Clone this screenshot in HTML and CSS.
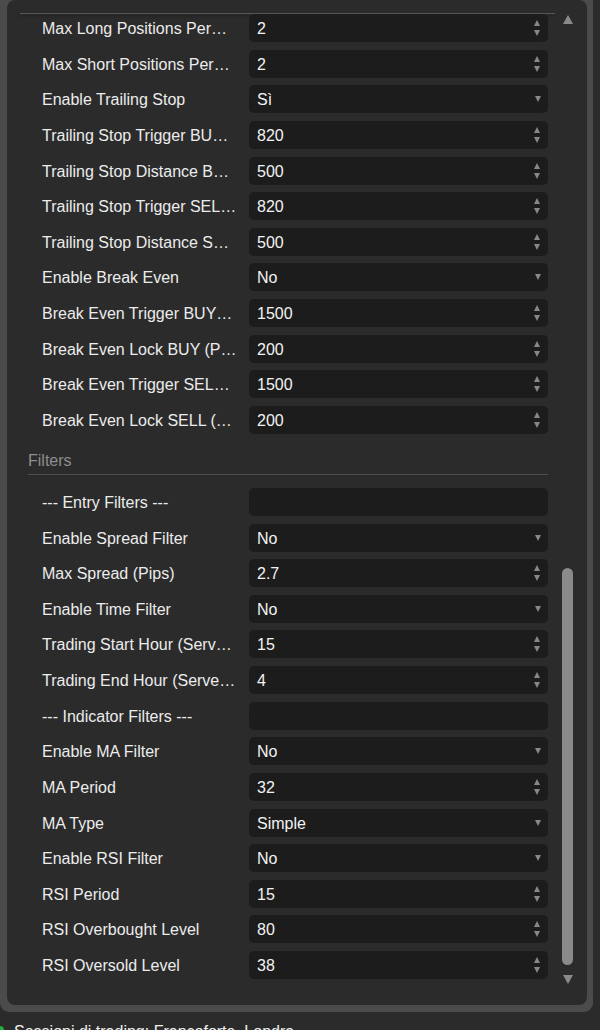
FILE: index.html
```html
<!DOCTYPE html>
<html lang="it">
<head>
<meta charset="utf-8">
<title>Parametri</title>
<link rel="stylesheet" href="styles.css">
</head>
<body>
<div class="frame">
  <div class="panel">
    <div class="content">
      <div class="top-rule"></div>
      <div class="rows">
        <div class="row"><span class="label">Max Long Positions Per…</span><div class="field spin"><span class="val">2</span><span class="spinner"></span></div></div>
        <div class="row"><span class="label">Max Short Positions Per…</span><div class="field spin"><span class="val">2</span><span class="spinner"></span></div></div>
        <div class="row"><span class="label">Enable Trailing Stop</span><div class="field select"><span class="val">Sì</span><span class="caret"></span></div></div>
        <div class="row"><span class="label">Trailing Stop Trigger BU…</span><div class="field spin"><span class="val">820</span><span class="spinner"></span></div></div>
        <div class="row"><span class="label">Trailing Stop Distance B…</span><div class="field spin"><span class="val">500</span><span class="spinner"></span></div></div>
        <div class="row"><span class="label">Trailing Stop Trigger SEL…</span><div class="field spin"><span class="val">820</span><span class="spinner"></span></div></div>
        <div class="row"><span class="label">Trailing Stop Distance S…</span><div class="field spin"><span class="val">500</span><span class="spinner"></span></div></div>
        <div class="row"><span class="label">Enable Break Even</span><div class="field select"><span class="val">No</span><span class="caret"></span></div></div>
        <div class="row"><span class="label">Break Even Trigger BUY…</span><div class="field spin"><span class="val">1500</span><span class="spinner"></span></div></div>
        <div class="row"><span class="label">Break Even Lock BUY (P…</span><div class="field spin"><span class="val">200</span><span class="spinner"></span></div></div>
        <div class="row"><span class="label">Break Even Trigger SEL…</span><div class="field spin"><span class="val">1500</span><span class="spinner"></span></div></div>
        <div class="row"><span class="label">Break Even Lock SELL (…</span><div class="field spin"><span class="val">200</span><span class="spinner"></span></div></div>
      </div>
      <div class="section-head">Filters</div>
      <div class="rows">
        <div class="row"><span class="label">--- Entry Filters ---</span><div class="field"></div></div>
        <div class="row"><span class="label">Enable Spread Filter</span><div class="field select"><span class="val">No</span><span class="caret"></span></div></div>
        <div class="row"><span class="label">Max Spread (Pips)</span><div class="field spin"><span class="val">2.7</span><span class="spinner"></span></div></div>
        <div class="row"><span class="label">Enable Time Filter</span><div class="field select"><span class="val">No</span><span class="caret"></span></div></div>
        <div class="row"><span class="label">Trading Start Hour (Serv…</span><div class="field spin"><span class="val">15</span><span class="spinner"></span></div></div>
        <div class="row"><span class="label">Trading End Hour (Serve…</span><div class="field spin"><span class="val">4</span><span class="spinner"></span></div></div>
        <div class="row"><span class="label">--- Indicator Filters ---</span><div class="field"></div></div>
        <div class="row"><span class="label">Enable MA Filter</span><div class="field select"><span class="val">No</span><span class="caret"></span></div></div>
        <div class="row"><span class="label">MA Period</span><div class="field spin"><span class="val">32</span><span class="spinner"></span></div></div>
        <div class="row"><span class="label">MA Type</span><div class="field select"><span class="val">Simple</span><span class="caret"></span></div></div>
        <div class="row"><span class="label">Enable RSI Filter</span><div class="field select"><span class="val">No</span><span class="caret"></span></div></div>
        <div class="row"><span class="label">RSI Period</span><div class="field spin"><span class="val">15</span><span class="spinner"></span></div></div>
        <div class="row"><span class="label">RSI Overbought Level</span><div class="field spin"><span class="val">80</span><span class="spinner"></span></div></div>
        <div class="row"><span class="label">RSI Oversold Level</span><div class="field spin"><span class="val">38</span><span class="spinner"></span></div></div>
      </div>
    </div>
    <div class="scrollbar">
      <span class="sb-up"></span>
      <div class="track"><div class="thumb"></div></div>
      <span class="sb-down"></span>
    </div>
  </div>
</div>
<div class="status"><span class="dot"></span><span class="status-text">Sessioni di trading: Francoforte, Londra</span></div>
</body>
</html>
```

FILE: styles.css
```css
html, body {
  margin: 0;
  padding: 0;
}
body {
  width: 600px;
  height: 1030px;
  overflow: hidden;
  background: #2b2b2b;
  font-family: "Liberation Sans", Arial, sans-serif;
  font-size: 16px;
  color: #e8e8e8;
}
.frame {
  width: 593px;
  height: 1012px;
  box-sizing: border-box;
  padding: 0 6px 7px 7px;
  background: #4b4b4b;
  border-radius: 0 0 9px 9px;
  display: flex;
}
.panel {
  flex: 1;
  background: #2b2b2b;
  border-radius: 8px;
  display: flex;
  overflow: hidden;
}
.content {
  width: 548px;
  flex: none;
}
.top-rule {
  margin: 13px 0 0 13px;
  height: 1px;
  background: #565656;
  box-shadow: 0 2px 3px rgba(0, 0, 0, 0.25);
}
.rows {
  padding: 0 7px 0 35px;
  display: flex;
  flex-direction: column;
  gap: 7.64px;
}
.content > .rows:first-of-type {
  padding-top: 2px;
}
.row {
  height: 28px;
  display: flex;
  align-items: center;
}
.label {
  width: 200px;
  flex: none;
  margin-right: 7px;
  padding-top: 2px;
  white-space: nowrap;
  overflow: hidden;
  text-overflow: ellipsis;
  color: #ececec;
  line-height: 18px;
}
.field {
  flex: 1;
  height: 28px;
  background: #1c1c1c;
  border-radius: 5px;
  display: flex;
  align-items: center;
  padding: 0 7px 0 8px;
  box-sizing: border-box;
}
.val {
  flex: 1;
  padding-top: 2px;
  color: #f2f2f2;
  line-height: 18px;
}
.spinner {
  width: 7px;
  height: 16px;
  position: relative;
  flex: none;
}
.spinner::before,
.spinner::after {
  content: "";
  position: absolute;
  left: 0;
  border-left: 3.5px solid transparent;
  border-right: 3.5px solid transparent;
}
.spinner::before {
  top: 0;
  border-bottom: 6px solid #888;
}
.spinner::after {
  bottom: 0;
  border-top: 6px solid #888;
}
.caret {
  flex: none;
  width: 0;
  height: 0;
  border-left: 3.5px solid transparent;
  border-right: 3.5px solid transparent;
  border-top: 6px solid #888;
}
.section-head {
  margin: 0 7px 13px 21px;
  padding: 18px 0 4px;
  line-height: 18px;
  color: #8e8e8e;
  border-bottom: 1px solid #4e4e4e;
}
.scrollbar {
  flex: 1;
  display: flex;
  flex-direction: column;
  padding: 15px 0 21px 7px;
}
.sb-up {
  width: 0;
  height: 0;
  border-left: 5px solid transparent;
  border-right: 5px solid transparent;
  border-bottom: 9px solid #8a8a8a;
  margin-left: 1px;
}
.sb-down {
  width: 0;
  height: 0;
  border-left: 5px solid transparent;
  border-right: 5px solid transparent;
  border-top: 9px solid #8a8a8a;
  margin-left: 1px;
}
.track {
  flex: 1;
  width: 11px;
  display: flex;
  flex-direction: column;
}
.thumb {
  margin-top: auto;
  margin-bottom: 10px;
  height: 397px;
  border-radius: 6px;
  background: #8a8a8a;
}
.status {
  margin-top: 11px;
  display: flex;
  align-items: flex-start;
  line-height: 18px;
}
.dot {
  width: 8px;
  height: 8px;
  border-radius: 50%;
  background: #1fae3a;
  margin-left: -4px;
  margin-right: 10px;
  margin-top: 3px;
  flex: none;
}
.status-text {
  color: #f0f0f0;
}
```
